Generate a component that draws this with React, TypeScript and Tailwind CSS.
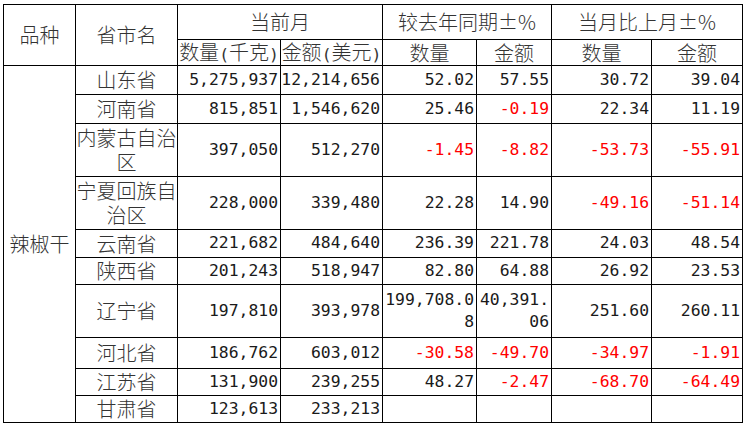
import React from "react";

const CJK = "font-['Noto_Sans_CJK_SC',sans-serif] font-light text-[20px] text-[#333333]";
const NUM = "font-['DejaVu_Sans_Mono',monospace] text-[16.4px] text-[#1a1a1a]";
const B = "border border-black p-0";

type Row = {
  name: React.ReactNode;
  h: number;
  q: string;
  a: string;
  yq: string;
  ya: string;
  mq: string;
  ma: string;
};

const rows: Row[] = [
  { name: "山东省", h: 29, q: "5,275,937", a: "12,214,656", yq: "52.02", ya: "57.55", mq: "30.72", ma: "39.04" },
  { name: "河南省", h: 29, q: "815,851", a: "1,546,620", yq: "25.46", ya: "-0.19", mq: "22.34", ma: "11.19" },
  { name: <>内蒙古自治<br />区</>, h: 53, q: "397,050", a: "512,270", yq: "-1.45", ya: "-8.82", mq: "-53.73", ma: "-55.91" },
  { name: <>宁夏回族自<br />治区</>, h: 53, q: "228,000", a: "339,480", yq: "22.28", ya: "14.90", mq: "-49.16", ma: "-51.14" },
  { name: "云南省", h: 28, q: "221,682", a: "484,640", yq: "236.39", ya: "221.78", mq: "24.03", ma: "48.54" },
  { name: "陕西省", h: 27, q: "201,243", a: "518,947", yq: "82.80", ya: "64.88", mq: "26.92", ma: "23.53" },
  { name: "辽宁省", h: 53, q: "197,810", a: "393,978", yq: "199,708.0\n8", ya: "40,391.\n06", mq: "251.60", ma: "260.11" },
  { name: "河北省", h: 31, q: "186,762", a: "603,012", yq: "-30.58", ya: "-49.70", mq: "-34.97", ma: "-1.91" },
  { name: "江苏省", h: 27, q: "131,900", a: "239,255", yq: "48.27", ya: "-2.47", mq: "-68.70", ma: "-64.49" },
  { name: "甘肃省", h: 27, q: "123,613", a: "233,213", yq: "", ya: "", mq: "", ma: "" },
];

function NumCell({ v }: { v: string }) {
  const neg = v.startsWith("-");
  const parts = v.split("\n");
  return (
    <td
      className={`${B} ${NUM} text-right pr-[2px] whitespace-nowrap ${parts.length > 1 ? "leading-[22px]" : "leading-none"} ${
        neg ? "!text-[#ff0000]" : ""
      }`}
    >
      {parts.map((p, i) => (
        <React.Fragment key={i}>
          {i > 0 && <br />}
          {p}
        </React.Fragment>
      ))}
    </td>
  );
}

const P = ({ c }: { c: string }) => (
  <span className="font-['DejaVu_Sans_Mono',monospace] text-[16.4px]">{c}</span>
);

export default function App() {
  return (
    <div className="w-[750px] h-[428px] bg-white pt-[4px] pl-[3px]">
      <table className="border-collapse table-fixed w-[739px]">
        <colgroup>
          <col className="w-[72px]" />
          <col className="w-[102px]" />
          <col className="w-[103px]" />
          <col className="w-[102px]" />
          <col className="w-[94px]" />
          <col className="w-[75px]" />
          <col className="w-[100px]" />
          <col className="w-[91px]" />
        </colgroup>
        <tbody>
          <tr className="h-[35px]">
            <td rowSpan={2} className={`${B} ${CJK} text-center leading-none`}>品种</td>
            <td rowSpan={2} className={`${B} ${CJK} text-center leading-none`}>省市名</td>
            <td colSpan={2} className={`${B} ${CJK} text-center leading-none`}>当前月</td>
            <td colSpan={2} className={`${B} ${CJK} text-center leading-none`}>较去年同期±%</td>
            <td colSpan={2} className={`${B} ${CJK} text-center leading-none`}>当月比上月±%</td>
          </tr>
          <tr className="h-[26px]">
            <td className={`${B} ${CJK} text-center leading-none whitespace-nowrap`}>数量<P c="(" />千克<P c=")" /></td>
            <td className={`${B} ${CJK} text-center leading-none whitespace-nowrap`}>金额<P c="(" />美元<P c=")" /></td>
            <td className={`${B} ${CJK} text-center leading-none`}>数量</td>
            <td className={`${B} ${CJK} text-center leading-none`}>金额</td>
            <td className={`${B} ${CJK} text-center leading-none`}>数量</td>
            <td className={`${B} ${CJK} text-center leading-none`}>金额</td>
          </tr>
          {rows.map((r, i) => (
            <tr key={i} style={{ height: r.h }}>
              {i === 0 && (
                <td rowSpan={10} className={`${B} ${CJK} text-center leading-none`}>辣椒干</td>
              )}
              <td className={`${B} ${CJK} text-center leading-[24px] whitespace-nowrap`}>{r.name}</td>
              <NumCell v={r.q} />
              <NumCell v={r.a} />
              <NumCell v={r.yq} />
              <NumCell v={r.ya} />
              <NumCell v={r.mq} />
              <NumCell v={r.ma} />
            </tr>
          ))}
        </tbody>
      </table>
    </div>
  );
}
